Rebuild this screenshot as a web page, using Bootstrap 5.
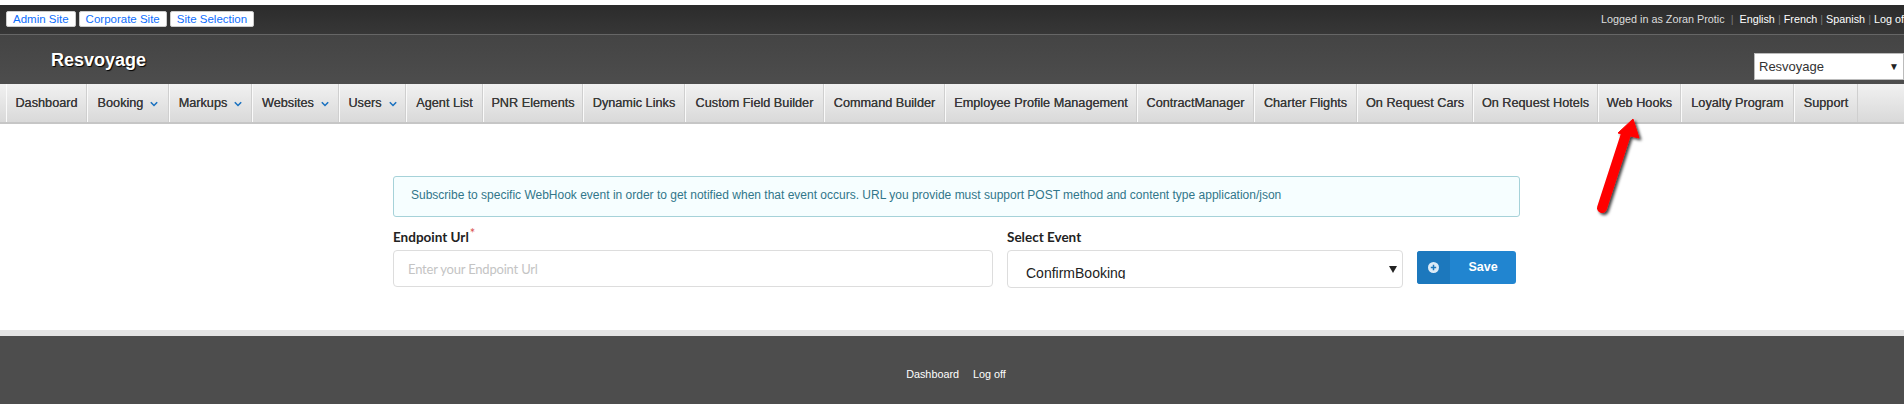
<!DOCTYPE html>
<html lang="en">
<head>
    <meta charset="UTF-8">
    <meta name="viewport" content="width=device-width, initial-scale=1.0">
    <title>Web Hooks</title>
    <link href="https://cdn.jsdelivr.net/npm/bootstrap@5.3.0/dist/css/bootstrap.min.css" rel="stylesheet">
    <style>
        html, body { height: 404px; overflow: hidden; }
        body { font-family: "Liberation Sans", Arial, sans-serif; background: #fff; padding-top: 5px; position: relative; width: 1904px; }
        .top-strip { height: 29px; background: linear-gradient(#2b2b2b, #373737); padding: 6px 0 0 6px; white-space: nowrap; }
        .site-btn { display: block; height: 16px; line-height: 14px; padding: 0 6px; margin-right: 3px; background: #fff; border: 1px solid #ccc; border-radius: 2px; color: #0d6efd; font-size: 11.5px; text-decoration: none; }
        .top-right { color: #ddd; font-size: 10.8px; line-height: 16px; width: 303px; flex-shrink: 0; overflow: hidden; }
        .top-right a { color: #fff; text-decoration: none; }
        .top-right .sep { color: #777; margin: 0 3px; }
        .head-band { height: 50px; background: linear-gradient(#444, #4d4d4d); border-top: 1px solid #666; position: relative; }
        .brand-name { color: #fff; font-size: 18px; font-weight: 700; text-shadow: 1px 1px 1px #000; padding: 15px 0 0 51px; line-height: 20px; }
        .agency-select { position: absolute; left: 1754px; top: 18px; width: 150px; height: 27px; border: 1px solid #bbb; background: #fff; font-size: 13px; padding-left: 4px; line-height: 25px; color: #333; }
        .agency-select span { position: absolute; right: 4px; top: 0; font-size: 10px; color: #222; }
        .main-menu { height: 40px; background: linear-gradient(#f1f1f1, #d9d9d9); border-bottom: 2px solid #c6c6c6; padding-left: 6px; display: grid; grid-template-columns: 81px 82px 83px 87px 67px 77px 100px 102px 139px 121px 192px 117px 103px 116px 125px 83px 113px 64px; }
        .main-menu .nav-link { height: 38px; padding: 1px 0 0; color: #3a3a3a; font-size: 12.7px; border-left: 1px solid #fafafa; border-right: 1px solid #cfcfcf; display: flex; align-items: center; justify-content: center; white-space: nowrap; text-shadow: 0 0 0 #3a3a3a; }
        .main-menu svg { width: 8px; height: 6px; margin-left: 7px; }
        .page-body { width: 1127px; margin: 52px 0 0 393px; height: 154px; }
        .note-box { height: 41px; background: #f6feff; border: 1px solid #a6d2d9; border-radius: 3px; color: #31768a; font-size: 12px; line-height: 37px; padding-left: 17px; margin-bottom: 12px; }
        .form-line { column-gap: 14px; }
        .field-label { font-family: Lato, sans-serif; font-size: 13.5px; font-weight: 700; color: #222; line-height: 17px; height: 16px; margin-bottom: 5px; display: block; }
        .field-label sup { color: #d9534f; font-size: 13px; top: -4px; margin-left: 1px; font-weight: 400; }
        .url-input { width: 600px; height: 37px; font-family: Lato, sans-serif; font-size: 13px; letter-spacing: -.2px; border: 1px solid #ddd; border-radius: 4px; padding: 0 14px; }
        .url-input::placeholder { color: #c4c4c4; }
        .event-select { width: 396px; height: 38px; font-family: "Liberation Sans", Arial, sans-serif; font-size: 14px; border: 1px solid #ddd; border-radius: 4px; padding: 12px 20px 8px 18px; color: #222; --bs-form-select-bg-img: url("data:image/svg+xml,%3csvg xmlns='http://www.w3.org/2000/svg' viewBox='0 0 8 8'%3e%3cpath fill='%23222' d='M0 1h8L4 8z'/%3e%3c/svg%3e"); background-size: 8px 8px; background-position: right 5px center; }
        .save-btn { width: 99px; height: 33px; margin-top: 22px; padding: 0; background: #2185d0; border: 0; border-radius: 3px; color: #fff; font-size: 12.5px; font-weight: 700; overflow: hidden; }
        .save-icon { width: 33px; height: 33px; background: #1c78bd; }
        .site-foot { height: 74px; background: #4d4d4d; border-top: 6px solid #e4e4e4; padding: 31px 0 0 8px; column-gap: 14px; }
        .site-foot a { color: #fff; font-size: 10.8px; text-decoration: none; line-height: 14px; }
        .red-arrow { position: absolute; left: 1590px; top: 110px; }
    </style>
</head>
<body>
<div class="top-strip d-flex justify-content-between">
    <div class="d-flex">
        <a class="site-btn" href="#">Admin Site</a>
        <a class="site-btn" href="#">Corporate Site</a>
        <a class="site-btn" href="#">Site Selection</a>
    </div>
    <div class="top-right">Logged in as Zoran Protic <span class="sep">|</span> <a href="#">English</a><span class="sep">|</span><a href="#">French</a><span class="sep">|</span><a href="#">Spanish</a><span class="sep">|</span><a href="#">Log off</a></div>
</div>

<div class="head-band">
    <div class="brand-name">Resvoyage</div>
    <div class="agency-select">Resvoyage<span>▼</span></div>
</div>

<ul class="nav main-menu">
    <li class="nav-item"><a class="nav-link" href="#">Dashboard</a></li>
    <li class="nav-item"><a class="nav-link" href="#">Booking<svg viewBox="0 0 7 5"><path d="M.7 1 3.5 3.8 6.3 1" fill="none" stroke="#1b72c0" stroke-width="1.4"/></svg></a></li>
    <li class="nav-item"><a class="nav-link" href="#">Markups<svg viewBox="0 0 7 5"><path d="M.7 1 3.5 3.8 6.3 1" fill="none" stroke="#1b72c0" stroke-width="1.4"/></svg></a></li>
    <li class="nav-item"><a class="nav-link" href="#">Websites<svg viewBox="0 0 7 5"><path d="M.7 1 3.5 3.8 6.3 1" fill="none" stroke="#1b72c0" stroke-width="1.4"/></svg></a></li>
    <li class="nav-item"><a class="nav-link" href="#">Users<svg viewBox="0 0 7 5"><path d="M.7 1 3.5 3.8 6.3 1" fill="none" stroke="#1b72c0" stroke-width="1.4"/></svg></a></li>
    <li class="nav-item"><a class="nav-link" href="#">Agent List</a></li>
    <li class="nav-item"><a class="nav-link" href="#">PNR Elements</a></li>
    <li class="nav-item"><a class="nav-link" href="#">Dynamic Links</a></li>
    <li class="nav-item"><a class="nav-link" href="#">Custom Field Builder</a></li>
    <li class="nav-item"><a class="nav-link" href="#">Command Builder</a></li>
    <li class="nav-item"><a class="nav-link" href="#">Employee Profile Management</a></li>
    <li class="nav-item"><a class="nav-link" href="#">ContractManager</a></li>
    <li class="nav-item"><a class="nav-link" href="#">Charter Flights</a></li>
    <li class="nav-item"><a class="nav-link" href="#">On Request Cars</a></li>
    <li class="nav-item"><a class="nav-link" href="#">On Request Hotels</a></li>
    <li class="nav-item"><a class="nav-link" href="#">Web Hooks</a></li>
    <li class="nav-item"><a class="nav-link" href="#">Loyalty Program</a></li>
    <li class="nav-item"><a class="nav-link" href="#">Support</a></li>
</ul>

<div class="page-body">
    <div class="note-box">Subscribe to specific WebHook event in order to get notified when that event occurs. URL you provide must support POST method and content type application/json</div>
    <div class="d-flex form-line">
        <div>
            <label class="field-label">Endpoint Url<sup>*</sup></label>
            <input class="form-control url-input" type="text" placeholder="Enter your Endpoint Url">
        </div>
        <div>
            <label class="field-label">Select Event</label>
            <select class="form-select event-select"><option>ConfirmBooking</option></select>
        </div>
        <button class="btn save-btn d-flex align-items-center" type="button">
            <span class="save-icon d-flex align-items-center justify-content-center">
                <svg width="11" height="11" viewBox="0 0 11 11"><circle cx="5.5" cy="5.5" r="5.5" fill="#dcebf7"/><path d="M5.5 2.8v5.4M2.8 5.5h5.4" stroke="#1c78bd" stroke-width="1.5"/></svg>
            </span>
            <span class="flex-grow-1 text-center">Save</span>
        </button>
    </div>
</div>

<div class="site-foot d-flex justify-content-center">
    <a href="#">Dashboard</a>
    <a href="#">Log off</a>
</div>

<svg class="red-arrow" width="60" height="112" viewBox="0 0 60 112">
    <defs><filter id="arrowShadow" x="-30%" y="-30%" width="160%" height="160%"><feDropShadow dx="2" dy="2" stdDeviation="1.5" flood-color="#000" flood-opacity=".75"/></filter></defs>
    <g filter="url(#arrowShadow)">
        <path d="M12 98 36 24" stroke="#f00" stroke-width="10" stroke-linecap="round" fill="none"/>
        <path d="M43 9 28 23 49 28z" fill="#f00" stroke="#f00" stroke-width="1" stroke-linejoin="round"/>
    </g>
</svg>

<script src="https://cdn.jsdelivr.net/npm/bootstrap@5.3.0/dist/js/bootstrap.bundle.min.js"></script>
</body>
</html>
